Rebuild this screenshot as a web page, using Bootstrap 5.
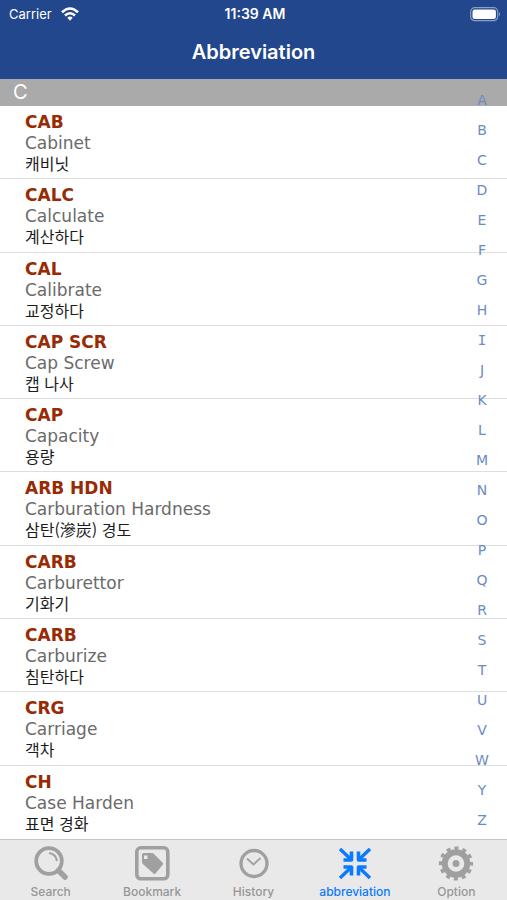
<!DOCTYPE html>
<html lang="en">
<head>
<meta charset="utf-8">
<meta name="viewport" content="width=device-width, initial-scale=1">
<title>Abbreviation</title>
<link href="https://cdn.jsdelivr.net/npm/bootstrap@5.3.0/dist/css/bootstrap.min.css" rel="stylesheet">
<style>
body { font-family: Inter, "Noto Sans CJK KR", sans-serif; }
.top-area { background: #22478d; }
.status-line { font-size: 13px; line-height: 28px; padding: 0 6px 0 9px; }
.status-line .clock { font-size: 14px; font-weight: 600; }
.page-title { font-size: 20px; line-height: 49px; font-weight: 600; padding-bottom: 2px; }
.section-head { background: #aaa; font-size: 20px; line-height: 27px; padding-left: 13px; }
.terms { font-family: "DejaVu Sans", "Noto Sans CJK KR", sans-serif; }
.terms .term { padding: 6px 40px 2px 25px; border-bottom: 1px solid #dedede; }
.terms .term:last-child { border-bottom-color: transparent; }
.term dt, .term dd { margin: 0; font-size: 17px; line-height: 21px; }
.term dt { color: #982b04; }
.term .full { color: #6a6a6a; }
.term .ko { color: #1c1c1c; font-family: "Noto Sans CJK KR", sans-serif; font-size: 16px; line-height: 18px; }
.letter-index { top: 7px; bottom: 4px; right: 13px; width: 24px; }
.letter-index a { color: #6b8bc3; font: 14px/29px "DejaVu Sans", sans-serif; }
.letter-index .serif-i { font-family: "DejaVu Sans Mono", monospace; }
.tabs { background: #e9e9e9; border-top: 1px solid #c6c6c6; height: 61px; }
.tabs .tab { flex: 1 1 0; color: #969696; font-size: 12px; line-height: 14px; font-weight: 500; padding: 5px 0 0; }
.tabs .tab.active { color: #0b7aff; }
.tabs svg { width: 38px; height: 38px; margin-bottom: 2px; }
</style>
</head>
<body>
<div class="d-flex flex-column min-vh-100 bg-white">
  <header class="top-area text-white">
    <div class="status-line row g-0 align-items-center">
      <div class="col d-flex align-items-center gap-2"><span>Carrier</span>
        <svg width="20" height="14" viewBox="0 0 18 14" fill="none" stroke="#fff" stroke-width="2.6" aria-label="Wi-Fi"><path d="M1 5.3Q9-2.3 17 5.3M4 8.5Q9 4 14 8.5"/><path d="M6.3 10.8Q9 8.4 11.7 10.8L9 13.7z" fill="#fff" stroke="none"/></svg>
      </div>
      <div class="col-auto clock">11:39 AM</div>
      <div class="col d-flex justify-content-end">
        <svg width="31" height="15" viewBox="0 0 31 15" aria-label="Battery"><rect x=".7" y=".7" width="27" height="13" rx="4" fill="none" stroke="#899fc5" stroke-width="1.2"/><rect x="2.5" y="2.5" width="23.4" height="9.4" rx="2.2" fill="#fff"/><path d="M29 5q2 2.2 0 4.4z" fill="#899fc5"/></svg>
      </div>
    </div>
    <h1 class="page-title text-center mb-0">Abbreviation</h1>
  </header>
  <main class="position-relative flex-fill d-flex flex-column">
    <h2 class="section-head text-white fw-normal mb-0">C</h2>
    <dl class="terms flex-fill d-flex flex-column mb-0">
      <div class="term flex-fill"><dt>CAB</dt><dd class="full">Cabinet</dd><dd class="ko" lang="ko">캐비닛</dd></div>
      <div class="term flex-fill"><dt>CALC</dt><dd class="full">Calculate</dd><dd class="ko" lang="ko">계산하다</dd></div>
      <div class="term flex-fill"><dt>CAL</dt><dd class="full">Calibrate</dd><dd class="ko" lang="ko">교정하다</dd></div>
      <div class="term flex-fill"><dt>CAP SCR</dt><dd class="full">Cap Screw</dd><dd class="ko" lang="ko">캡 나사</dd></div>
      <div class="term flex-fill"><dt>CAP</dt><dd class="full">Capacity</dd><dd class="ko" lang="ko">용량</dd></div>
      <div class="term flex-fill"><dt>ARB HDN</dt><dd class="full">Carburation Hardness</dd><dd class="ko" lang="ko">삼탄(滲炭) 경도</dd></div>
      <div class="term flex-fill"><dt>CARB</dt><dd class="full">Carburettor</dd><dd class="ko" lang="ko">기화기</dd></div>
      <div class="term flex-fill"><dt>CARB</dt><dd class="full">Carburize</dd><dd class="ko" lang="ko">침탄하다</dd></div>
      <div class="term flex-fill"><dt>CRG</dt><dd class="full">Carriage</dd><dd class="ko" lang="ko">객차</dd></div>
      <div class="term flex-fill"><dt>CH</dt><dd class="full">Case Harden</dd><dd class="ko" lang="ko">표면 경화</dd></div>
    </dl>
    <nav class="letter-index position-absolute d-flex flex-column justify-content-between text-center" aria-label="Letters">
      <a class="text-decoration-none" href="#">A</a><a class="text-decoration-none" href="#">B</a><a class="text-decoration-none" href="#">C</a><a class="text-decoration-none" href="#">D</a><a class="text-decoration-none" href="#">E</a><a class="text-decoration-none" href="#">F</a><a class="text-decoration-none" href="#">G</a><a class="text-decoration-none" href="#">H</a><a class="text-decoration-none serif-i" href="#">I</a><a class="text-decoration-none" href="#">J</a><a class="text-decoration-none" href="#">K</a><a class="text-decoration-none" href="#">L</a><a class="text-decoration-none" href="#">M</a><a class="text-decoration-none" href="#">N</a><a class="text-decoration-none" href="#">O</a><a class="text-decoration-none" href="#">P</a><a class="text-decoration-none" href="#">Q</a><a class="text-decoration-none" href="#">R</a><a class="text-decoration-none" href="#">S</a><a class="text-decoration-none" href="#">T</a><a class="text-decoration-none" href="#">U</a><a class="text-decoration-none" href="#">V</a><a class="text-decoration-none" href="#">W</a><a class="text-decoration-none" href="#">Y</a><a class="text-decoration-none" href="#">Z</a>
    </nav>
  </main>
  <nav class="tabs d-flex" aria-label="Main">
    <button type="button" class="tab btn border-0 rounded-0 d-flex flex-column align-items-center">
      <svg viewBox="0 0 38 38" fill="none" stroke="#a0a0a0"><circle cx="17" cy="16" r="12.8" stroke-width="3.8"/><path d="M26.5 25.5L33 32" stroke-width="5.5" stroke-linecap="round"/><path d="M17 8Q24 9 25 16" stroke-width="2"/></svg>
      <span>Search</span></button>
    <button type="button" class="tab btn border-0 rounded-0 d-flex flex-column align-items-center">
      <svg viewBox="0 0 38 38"><rect x="3.8" y="2.8" width="31" height="31" rx="4" fill="none" stroke="#a0a0a0" stroke-width="3.6"/><path fill="#a0a0a0" fill-rule="evenodd" d="M9 9.5Q9 8 10.5 8H19Q20 8 21 9L29.5 17.5Q30.5 18.5 29.7 19.7L22.5 28.5Q21.5 29.5 20.5 28.5L9.8 19Q9 18 9 17zM11 10.5V14H14.5V10.5z"/></svg>
      <span>Bookmark</span></button>
    <button type="button" class="tab btn border-0 rounded-0 d-flex flex-column align-items-center">
      <svg viewBox="0 0 38 38" fill="none" stroke="#a0a0a0"><circle cx="19" cy="18.5" r="13" stroke-width="3.3"/><path d="M12 13.5L18.5 19.5L25.5 13" stroke-width="1.8"/></svg>
      <span>History</span></button>
    <button type="button" class="tab active btn border-0 rounded-0 d-flex flex-column align-items-center" aria-current="page">
      <svg viewBox="0 0 38 38" fill="none" stroke="#0b7aff" stroke-width="3.4"><path d="M4 4L14 13.5M34 4L24 13.5M4 33L14 23.5M34 33L24 23.5"/><path d="M15.5 6.5V15H7.5M22.5 6.5V15H30.5M15.5 30.500V22H7.5M22.5 30.500V22H30.5" stroke-width="3.6" stroke-linejoin="round"/></svg>
      <span>abbreviation</span></button>
    <button type="button" class="tab btn border-0 rounded-0 d-flex flex-column align-items-center">
      <svg viewBox="0 0 38 38" fill="none" stroke="#a0a0a0"><circle cx="19" cy="18.5" r="11.3" stroke-width="6"/><circle cx="19" cy="18.5" r="15.3" stroke-width="3.6" stroke-dasharray="4 4.011" stroke-dashoffset="2"/><circle cx="19" cy="18.5" r="3.5" fill="#a0a0a0" stroke="none"/></svg>
      <span>Option</span></button>
  </nav>
</div>
<script src="https://cdn.jsdelivr.net/npm/bootstrap@5.3.0/dist/js/bootstrap.bundle.min.js"></script>
</body>
</html>
